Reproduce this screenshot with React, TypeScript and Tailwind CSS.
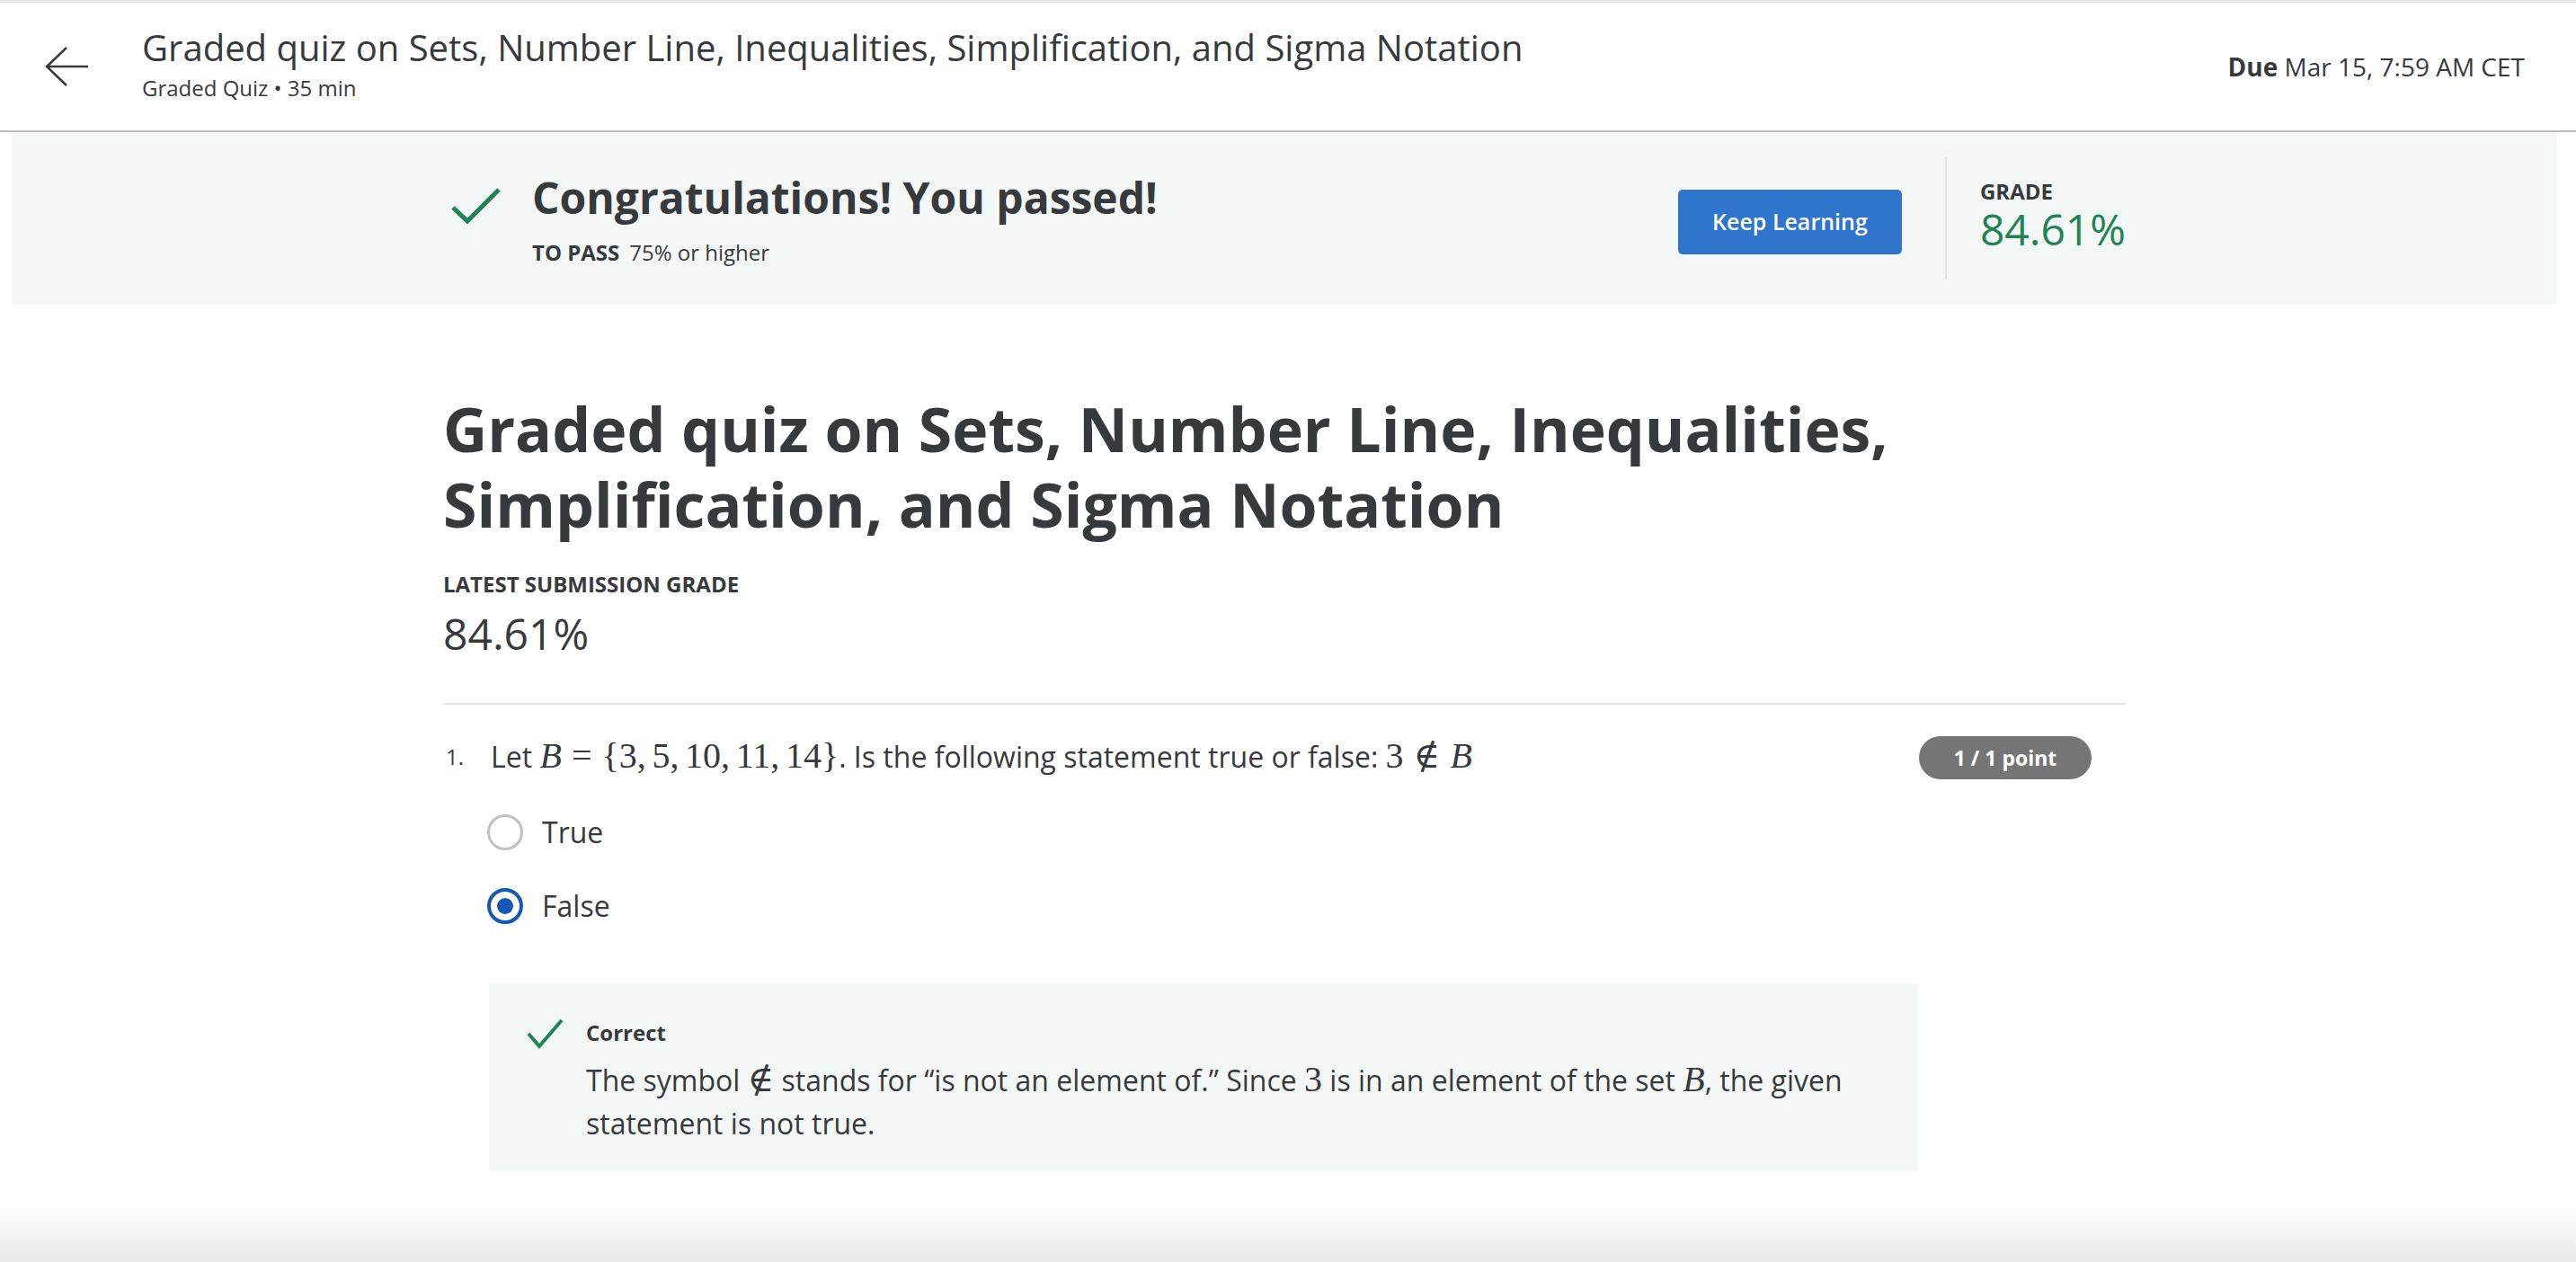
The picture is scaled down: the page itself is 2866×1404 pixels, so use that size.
import React from 'react';

const font = { fontFamily: '"Open Sans", "Liberation Sans", sans-serif' };

// KaTeX-like inline math pieces
const Mi: React.FC<{ children: React.ReactNode }> = ({ children }) => (
  <span className="italic">{children}</span>
);

const MathSpan: React.FC<{ children: React.ReactNode }> = ({ children }) => (
  <span
    className="inline-block text-[1.25em] leading-[1] whitespace-nowrap"
    style={{ fontFamily: '"Liberation Serif", "DejaVu Serif", serif' }}
  >
    {children}
  </span>
);

const Rel: React.FC<{ children: React.ReactNode }> = ({ children }) => (
  <span className="mx-[0.2777em]">{children}</span>
);

const Comma = () => <span className="mr-[0.1667em]">,</span>;

const CheckIcon: React.FC<{ className?: string; big?: boolean }> = ({ className, big }) =>
  big ? (
    <svg className={className} viewBox="0 0 60 44" fill="none">
      <polyline points="4,24 20,39 55,4" stroke="#1f8354" strokeWidth={5} />
    </svg>
  ) : (
    <svg className={className} viewBox="0 0 46 36" fill="none">
      <polyline points="5,18 17,32 42,3" stroke="#1f8354" strokeWidth={4} />
    </svg>
  );

export default function App() {
  return (
    <div className="w-full h-[1404px] bg-white text-[#373a3c] flex flex-col overflow-hidden" style={font}>
      {/* header */}
      <header className="h-[147px] shrink-0 border-t-[3px] border-b-2 border-t-[#e4e4e4] border-b-[#bdbdbd] flex items-center pl-[48px] pr-[57px]">
        <svg className="w-[52px] h-[50px] shrink-0" viewBox="0 0 52 50" fill="none">
          <path d="M26 4 L4 25 L26 46 M4 25 H50" stroke="#373a3c" strokeWidth={2.5} />
        </svg>
        <div className="ml-[58px] -mt-[8px]">
          <div className="text-[40px] leading-[50px]">
            Graded quiz on Sets, Number Line, Inequalities, Simplification, and Sigma Notation
          </div>
          <div className="text-[24px] leading-[30px] mt-[5px]">Graded Quiz • 35 min</div>
        </div>
        <div className="ml-auto text-[28px]">
          <span className="font-bold">Due</span> Mar 15, 7:59 AM CET
        </div>
      </header>

      {/* passed banner */}
      <div className="ml-[13px] mr-[21px] h-[192px] shrink-0 bg-[#f3f8f6]">
        <div className="w-[1872px] mx-auto h-full flex items-center justify-between">
          <div className="flex items-start">
            <CheckIcon big className="w-[60px] h-[44px] ml-[7px] mt-[17px] shrink-0" />
            <div className="ml-[32px]">
              <div className="text-[48px] leading-[60px] font-bold">Congratulations! You passed!</div>
              <div className="text-[24px] leading-[30px] mt-[16px]">
                <span className="font-bold">TO PASS</span>
                <span className="ml-[11px]">75% or higher</span>
              </div>
            </div>
          </div>
          <div className="flex items-center">
            <button className="mt-[8px] w-[249px] h-[72px] rounded-[5px] bg-[#2f75cc] text-white text-[25px] font-semibold">
              Keep Learning
            </button>
            <div className="ml-[48px] w-[2px] h-[136px] bg-[#e3e3e3]" />
            <div className="ml-[37px] -mt-[4px]">
              <div className="text-[24px] leading-[28px] font-bold">GRADE</div>
              <div className="text-[48px] leading-[56px] text-[#1f8354]">84.61%</div>
            </div>
          </div>
        </div>
      </div>

      {/* main content */}
      <main className="ml-[13px] mr-[21px]">
        <div className="w-[1872px] mx-auto">
          <h1 className="mt-[96px] text-[68px] leading-[84px] font-bold">
            Graded quiz on Sets, Number Line, Inequalities,
            <br />
            Simplification, and Sigma Notation
          </h1>
          <div className="mt-[31px] text-[24px] leading-[32px] font-bold">LATEST SUBMISSION GRADE</div>
          <div className="mt-[6px] text-[48px] leading-[66px]">84.61%</div>
          <div className="mt-[44px] h-[2px] bg-[#e1e1e1]" />

          {/* question */}
          <div className="mt-[34px] flex items-start">
            <div className="w-[53px] shrink-0 text-[24px] leading-[48px] pl-[3px]">1.</div>
            <div className="text-[32px] leading-[48px]">
              Let{' '}
              <MathSpan>
                <Mi>B</Mi>
                <Rel>=</Rel>
                {'{'}3<Comma />5<Comma />10<Comma />11<Comma />14{'}'}
              </MathSpan>
              . Is the following statement true or false:{' '}
              <MathSpan>
                3<Rel>∉</Rel>
                <Mi>B</Mi>
              </MathSpan>
            </div>
            <div className="ml-auto mr-[38px] mt-[1px] w-[192px] h-[48px] shrink-0 rounded-full bg-[#757575] text-white text-[23px] font-bold flex items-center justify-center">
              1 / 1 point
            </div>
          </div>

          {/* options */}
          <div className="mt-[35px] pl-[49px] flex flex-col gap-[34px]">
            <div className="h-[48px] flex items-center gap-[21px]">
              <div className="w-[40px] h-[40px] rounded-full border-[3.5px] border-[#c1c1c1] bg-white" />
              <span className="text-[32px]">True</span>
            </div>
            <div className="h-[48px] flex items-center gap-[21px]">
              <div className="w-[40px] h-[40px] rounded-full border-[4px] border-[#1558b8] bg-white flex items-center justify-center">
                <div className="w-[18px] h-[18px] rounded-full bg-[#1558b8]" />
              </div>
              <span className="text-[32px]">False</span>
            </div>
          </div>

          {/* feedback */}
          <div className="mt-[62px] ml-[51px] w-[1590px] bg-[#f3f8f6] pt-[40px] pb-[28px] pl-[39px] pr-[41px] flex">
            <CheckIcon className="w-[46px] h-[36px] -mt-[2px] shrink-0" />
            <div className="ml-[23px]">
              <div className="text-[24px] leading-[30px] font-bold">Correct</div>
              <p className="mt-[14px] text-[32px] leading-[48px]">
                The symbol{' '}
                <MathSpan>∉</MathSpan> stands for “is not an element of.” Since <MathSpan>3</MathSpan> is in an
                element of the set <MathSpan><Mi>B</Mi></MathSpan>, the given statement is not true.
              </p>
            </div>
          </div>
        </div>
      </main>

      <div className="mt-auto h-[64px] shrink-0 bg-gradient-to-b from-white to-[#e9e9e9]" />
    </div>
  );
}
